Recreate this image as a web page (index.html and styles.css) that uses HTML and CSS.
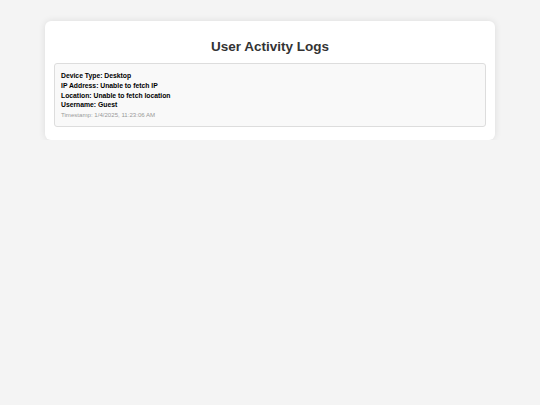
FILE: index.html
```html
<!DOCTYPE html>
<html>
<head>
<meta charset="utf-8">
<link rel="stylesheet" href="styles.css">
</head>
<body>
<div class="container">
  <h1 class="title">User Activity Logs</h1>
  <div class="log-entry">
    <div class="line">Device Type: Desktop</div>
    <div class="line">IP Address: Unable to fetch IP</div>
    <div class="line">Location: Unable to fetch location</div>
    <div class="line">Username: Guest</div>
    <div class="timestamp">Timestamp: 1/4/2025, 11:23:06 AM</div>
  </div>
</div>
</body>
</html>
```
FILE: styles.css
```css
html, body {
  margin: 0;
  padding: 0;
}
body {
  background: #f4f4f4;
  font-family: "Liberation Sans", Arial, sans-serif;
  padding-top: 21px;
}
.container {
  width: 450px;
  margin: 0 auto;
  box-sizing: border-box;
  background: #fff;
  border-radius: 6px;
  box-shadow: 0 0 7px rgba(0,0,0,0.1);
  padding: 17px 9px 13px;
}
.title {
  margin: 0 0 7px;
  text-align: center;
  font-size: 13.5px;
  line-height: 18px;
  color: #333;
}
.log-entry {
  background: #f9f9f9;
  border: 1px solid #ddd;
  border-radius: 3px;
  padding: 7px 6px 6px;
}
.line {
  font-size: 6.8px;
  font-weight: bold;
  line-height: 9.75px;
  color: #000;
}
.timestamp {
  font-size: 6.1px;
  line-height: 9.75px;
  color: #999;
}
```
